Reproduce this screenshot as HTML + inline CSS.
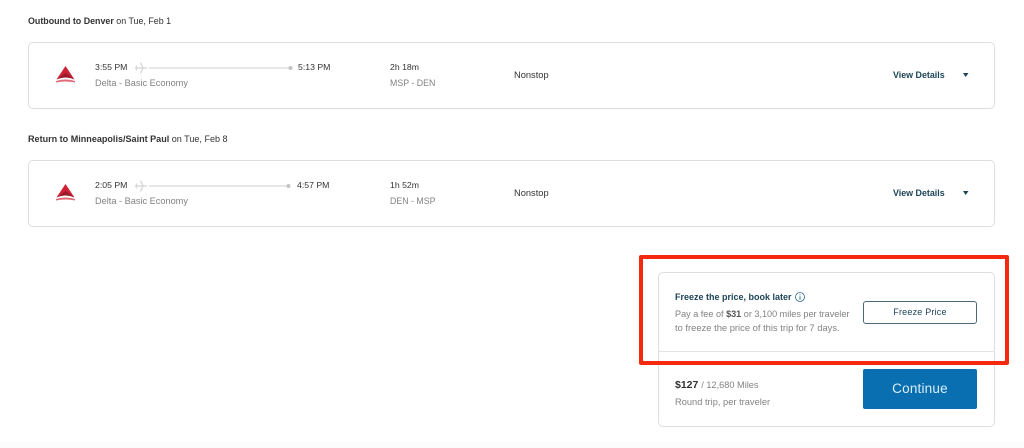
<!DOCTYPE html>
<html><head><meta charset="utf-8"><style>
html,body{margin:0;padding:0;background:#fff}
body{width:1024px;height:448px;position:relative;overflow:hidden;font-family:"Liberation Sans",sans-serif;color:#333}
#w{position:absolute;left:0;top:0;width:1024px;height:448px;filter:blur(.3px)}
.t{position:absolute;white-space:nowrap;font-size:8.7px;line-height:12px}
.g{color:#828282}
.n{color:#1d4358;font-weight:bold}
.d{font-size:9.2px}
.b{position:absolute;box-sizing:border-box;border:1px solid #dedede;border-radius:5px;background:#fff}
svg{position:absolute}
</style></head><body><div id="w">
<div class="t" style="left:28px;top:15px;font-size:8.9px"><b>Outbound to Denver</b> on Tue, Feb 1</div>
<div class="b" style="left:28px;top:42px;width:967px;height:67px"></div>
<svg style="left:55px;top:66px" width="21" height="18" viewBox="0 0 21 18"><path d="M10.500 0L19.500 13.500Q10.500 9.500 1.500 13.500z" fill="#cf2136"/><path d="M10.500 7L19.500 13.500Q10.500 9.500 1.500 13.500z" fill="#981b2c"/><path d="M1 15Q10.500 12 20 15L20 16.500Q10.500 14.500 1 16.500z" fill="#df6a76"/></svg>
<div class="t" style="left:95px;top:61px">3:55 PM</div>
<div class="t g d" style="left:95px;top:76.500px">Delta - Basic Economy</div>
<svg style="left:134px;top:61px" width="160" height="13" viewBox="0 0 160 13"><path d="M1 7H13M6.500 1.500L9 7L6.500 12.500M2.500 4.500V9.500" stroke="#dadada" stroke-width="1.500" fill="none"/><path d="M15 7H155" stroke="#cfcfcf" stroke-width="1"/><circle cx="156.500" cy="7" r="2" fill="#c4c4c4"/></svg>
<div class="t" style="left:298px;top:61px">5:13 PM</div>
<div class="t" style="left:390px;top:61px">2h 18m</div>
<div class="t g" style="left:390px;top:76.500px;font-size:8.800px">MSP - DEN</div>
<div class="t" style="left:514px;top:69px;font-size:9.300px">Nonstop</div>
<div class="t n" style="left:893px;top:69px;font-size:8.900px">View Details</div>
<svg style="left:962px;top:72px" width="7" height="6"><path d="M1 1H6.500L3.700 5z" fill="#1d4358"/></svg>

<div class="t" style="left:28px;top:133px;font-size:9.050px"><b>Return to Minneapolis/Saint Paul</b> on Tue, Feb 8</div>
<div class="b" style="left:28px;top:160px;width:967px;height:67px"></div>
<svg style="left:55px;top:184px" width="21" height="18" viewBox="0 0 21 18"><path d="M10.500 0L19.500 13.500Q10.500 9.500 1.500 13.500z" fill="#cf2136"/><path d="M10.500 7L19.500 13.500Q10.500 9.500 1.500 13.500z" fill="#981b2c"/><path d="M1 15Q10.500 12 20 15L20 16.500Q10.500 14.500 1 16.500z" fill="#df6a76"/></svg>
<div class="t" style="left:95px;top:179px">2:05 PM</div>
<div class="t g d" style="left:95px;top:194.500px">Delta - Basic Economy</div>
<svg style="left:134px;top:179px" width="160" height="13" viewBox="0 0 160 13"><path d="M1 7H13M6.500 1.500L9 7L6.500 12.500M2.500 4.500V9.500" stroke="#dadada" stroke-width="1.500" fill="none"/><path d="M15 7H153" stroke="#cfcfcf" stroke-width="1"/><circle cx="154.500" cy="7" r="2" fill="#c4c4c4"/></svg>
<div class="t" style="left:297px;top:179px">4:57 PM</div>
<div class="t" style="left:390px;top:179px">1h 52m</div>
<div class="t g" style="left:390px;top:194.500px;font-size:8.800px">DEN - MSP</div>
<div class="t" style="left:514px;top:187px;font-size:9.300px">Nonstop</div>
<div class="t n" style="left:893px;top:187px;font-size:8.900px">View Details</div>
<svg style="left:962px;top:190px" width="7" height="6"><path d="M1 1H6.500L3.700 5z" fill="#1d4358"/></svg>

<div class="b" style="left:658px;top:272px;width:337px;height:155px"></div>
<div style="position:absolute;left:658px;top:351px;width:337px;height:1px;background:#e2e2e2"></div>
<div class="t n" style="left:675px;top:291px;font-size:9px">Freeze the price, book later</div>
<svg style="left:795px;top:292px" width="11" height="11" viewBox="0 0 11 11"><circle cx="5" cy="5" r="4.500" fill="none" stroke="#2b6a8f" stroke-width=".8"/><path d="M5 4.300V7.700M5 2.300V3.300" stroke="#2b6a8f" stroke-width=".9"/></svg>
<div class="t g" style="left:675px;top:308px;font-size:9.100px">Pay a fee of <b style="color:#555">$31</b> or 3,100 miles per traveler</div>
<div class="t g" style="left:675px;top:322px;font-size:9.400px">to freeze the price of this trip for 7 days.</div>
<div style="position:absolute;box-sizing:border-box;left:863px;top:301px;width:114px;height:23px;border:1px solid #4a6a7c;border-radius:3px;color:#1d4358;font-size:9px;line-height:20px;text-align:center;letter-spacing:.2px">Freeze Price</div>
<div class="t" style="left:675px;top:378.500px;font-size:10.500px"><b>$127</b> <span class="g" style="font-size:9.200px">/ 12,680 Miles</span></div>
<div class="t g" style="left:675px;top:395.500px;font-size:9.300px">Round trip, per traveler</div>
<div style="position:absolute;left:863px;top:369px;width:114px;height:40px;background:#0a6fb0;border-radius:2px;color:#d8edf8;font-size:13.500px;line-height:40px;text-align:center;letter-spacing:.2px">Continue</div>

<div style="position:absolute;left:639px;top:255px;width:370px;height:110px;box-sizing:border-box;border:4.500px solid #f5290d;border-radius:2px"></div>
<div style="position:absolute;left:0;top:442px;width:1024px;height:6px;background:#fbfbfb"></div>
</div></body></html>
